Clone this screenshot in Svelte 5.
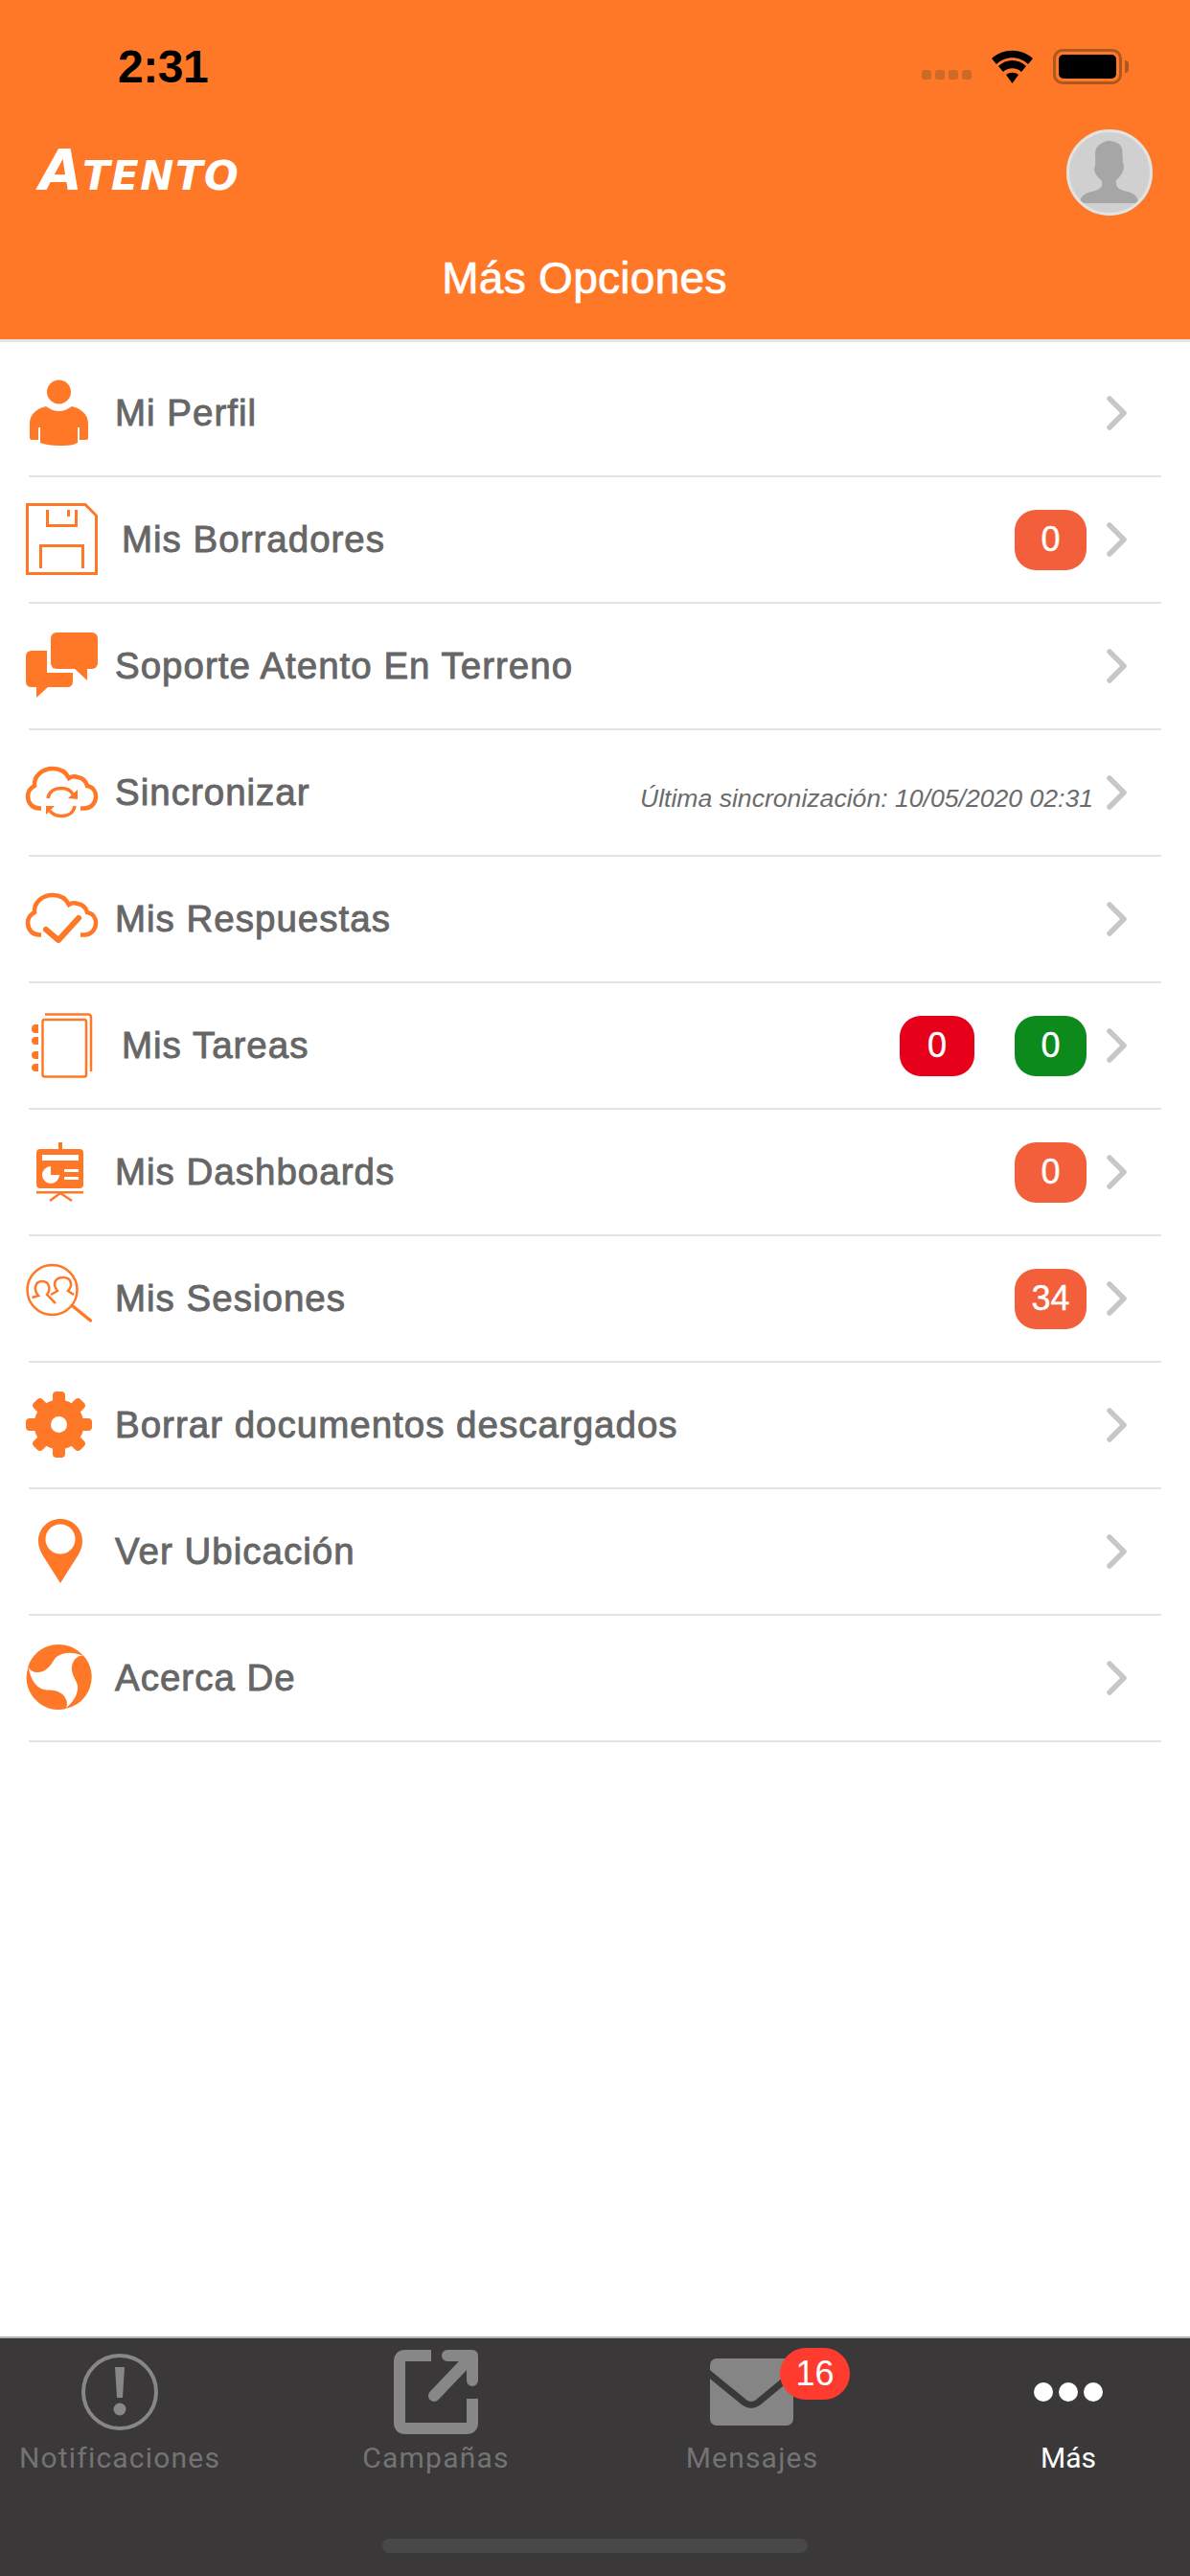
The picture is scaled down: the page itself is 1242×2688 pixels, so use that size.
<script>
  // Más Opciones screen: orange header, menu list, dark tab bar.
  const rows = [
    { id: 'perfil', label: 'Mi Perfil' },
    { id: 'borradores', label: 'Mis Borradores', wide: true, badges: [{ n: 0, c: 'orange' }] },
    { id: 'soporte', label: 'Soporte Atento En Terreno' },
    { id: 'sync', label: 'Sincronizar', note: 'Última sincronización: 10/05/2020 02:31' },
    { id: 'respuestas', label: 'Mis Respuestas' },
    { id: 'tareas', label: 'Mis Tareas', wide: true, badges: [{ n: 0, c: 'red' }, { n: 0, c: 'green' }] },
    { id: 'dash', label: 'Mis Dashboards', badges: [{ n: 0, c: 'orange' }] },
    { id: 'sesiones', label: 'Mis Sesiones', badges: [{ n: 34, c: 'orange' }] },
    { id: 'borrar', label: 'Borrar documentos descargados' },
    { id: 'ubicacion', label: 'Ver Ubicación' },
    { id: 'acerca', label: 'Acerca De' }
  ];
  const cloud =
    'M17 63.5H15C8 63.5 3 58 3 51C3 46 6 42 10 40C9 30 18 22 29 22C37 22 43 26 46 32C49 30 52 30 55 31C61 32 64 36 65 40C71 41 74 46 74 51C74 58 69 63 63 63.5H58';
</script>

{#snippet icon(id)}
  <svg class="ico" viewBox="0 0 94 94" fill="none">
    {#if id === 'perfil'}
      <circle cx="35.5" cy="25" r="12.5" fill="#ff7827" />
      <path fill="#ff7827" d="M5 73V58C5 47 14 42 22 40C26 43 31 45 35.5 45C40 45 45 43 49 40C57 42 66 47 66 58V73Q66 75 64 75H57V62H55V78C50 81 43 81 35.5 81C28 81 21 80 16 78V62H14V75H7Q5 75 5 73Z" />
    {:else if id === 'borradores'}
      <g stroke="#ff7827" stroke-width="3">
        <path d="M2.5 10.5H63L74.5 22V82.5H2.5Z" />
        <path d="M23.5 16V32.5H53.5V16M45.5 16V23M16.5 77V53.5H60.5V77" />
      </g>
    {:else if id === 'soporte'}
      <rect x="27" y="12" width="49" height="38" rx="6" fill="#ff7827" />
      <path fill="#ff7827" d="M52 50L65 62V50ZM7 31H23V54H50V63Q50 69 44 69H24L12 80V69H7Q1 69 1 63V37Q1 31 7 31Z" />
    {:else if id === 'sync'}
      <path d={cloud} stroke="#ff7827" stroke-width="4.5" />
      <g stroke="#ff7827" stroke-width="3.5">
        <path d="M24 53C25 46 31 42.5 38 42.5C44 42.5 48 45 50 49" />
        <path d="M52 61C51 68 45 71.5 38 71.5C33 71.5 29 70 26 66" />
      </g>
      <path fill="#ff7827" d="M45 53L55 44V54ZM31 61L22 70V61Z" />
    {:else if id === 'respuestas'}
      <path d={cloud} stroke="#ff7827" stroke-width="4.5" />
      <path d="M22 58L35 69L56 46" stroke="#ff7827" stroke-width="6" stroke-linecap="round" stroke-linejoin="round" />
    {:else if id === 'tareas'}
      <path d="M21 14.5H66Q69 14.5 69 18V74" stroke="#ff7827" stroke-width="2.5" />
      <rect x="18.5" y="20" width="45.5" height="59.5" rx="2" stroke="#ff7827" stroke-width="2.5" />
      <path fill="#ff7827" d="M14 25V34H11Q7 34 7 29.5Q7 25 11 25ZM14 38V46H11Q7 46 7 42Q7 38 11 38ZM14 53V61H11Q7 61 7 57Q7 53 11 53ZM14 66V74H11Q7 74 7 70Q7 66 11 66Z" />
    {:else if id === 'dash'}
      <rect x="35" y="16" width="4" height="8" fill="#ff7827" />
      <rect x="12" y="23" width="49" height="41" rx="4" fill="#ff7827" />
      <rect x="18" y="29" width="38" height="6" fill="#fff" />
      <path fill="#fff" d="M27 41A9 9 0 1 0 36 50H27Z" />
      <path fill="#fff" d="M41 44H56V47H41ZM41 52H56V55H41Z" />
      <rect x="12" y="67" width="49" height="2.5" fill="#ff7827" />
      <path d="M37 69L26 77M37 69L49 77" stroke="#ff7827" stroke-width="2.5" />
    {:else if id === 'sesiones'}
      <circle cx="28.5" cy="38" r="26" stroke="#ff7827" stroke-width="2.5" />
      <path d="M50 55L68.5 70" stroke="#ff7827" stroke-width="3.5" stroke-linecap="round" />
      <path d="M7.5 46L14 44C9 38 10 29 18 29C26 29 27 38 23 43L32 52" stroke="#ff7827" stroke-width="2.5" />
      <path d="M27 43L34 39C29 33 30 25 40 25C49 25 50 34 45 39L51 43" stroke="#ff7827" stroke-width="2.5" />
    {:else if id === 'borrar'}
      <g fill="#ff7827">
        <circle cx="35.5" cy="46.5" r="26" />
        {#each [0, 45, 90, 135, 180, 225, 270, 315] as a}
          <rect x="29" y="12" width="13" height="14" rx="4" transform="rotate({a} 35.5 46.5)" />
        {/each}
      </g>
      <circle cx="35.5" cy="46.5" r="8.5" fill="#fff" />
    {:else if id === 'ubicacion'}
      <path fill="#ff7827" fill-rule="evenodd" d="M37 13C24 13 14 23 14 36C14 42 16 46 18 50L37 80L56 50C58 46 60 42 60 36C60 23 50 13 37 13ZM37 18.5A15.5 15.5 0 1 1 37 49.5A15.5 15.5 0 1 1 37 18.5Z" />
    {:else if id === 'acerca'}
      {#each [0, 120, 240] as a}
        <path fill="#ff7827" transform="rotate({a} 35.5 46)" d="M61 23.5A33.5 33.5 0 0 1 42 79C51 72 56 63 55 55C54 49 48 44 49 35C50 28 55 23 61 23.5Z" />
      {/each}
    {/if}
  </svg>
{/snippet}

<div class="screen">
  <header class="top">
    <div class="status">
      <span class="time">2:31</span>
      <div class="status-right">
        <div class="dots"><i></i><i></i><i></i><i></i></div>
        <svg class="wifi" viewBox="0 0 47 36" fill="none">
          <path d="M2 10L7 16C16 7 31 7 40 16L45 10C33 -1 14 -1 2 10Z" fill="#000" />
          <path d="M9 18L14 24C19 19 28 19 33 24L38 18C30 10 17 10 9 18Z" fill="#000" />
          <path d="M17 27C21 24 26 24 30 27L23.5 36Z" fill="#000" />
        </svg>
        <div class="battery"><span></span></div>
        <i class="nub"></i>
      </div>
    </div>
    <div class="brand-row">
      <span class="brand">A<span>TENTO</span></span>
      <div class="avatar">
        <svg viewBox="3 3 84 84">
          <path fill="#a6a6a6" d="M14 77C14 68 22 66 30 64C36 62 38 60 37 54C33 50 29 46 29 41C31 38 30 30 30 24C31 16 38 14 42 12C48 12 56 13 58 20C59 28 58 32 60 38C60 44 56 50 52 53C51 60 54 62 60 64C68 66 75 68 75 77Z" />
        </svg>
      </div>
    </div>
    <h1>Más Opciones</h1>
  </header>

  <main class="list">
    {#each rows as r}
      <div class="row">
        {@render icon(r.id)}
        <span class="label" class:wide={r.wide}>{r.label}</span>
        {#if r.note}<span class="note">{r.note}</span>{/if}
        {#if r.badges}
          <div class="badges">
            {#each r.badges as b}<span class="badge {b.c}">{b.n}</span>{/each}
          </div>
        {/if}
        <svg class="chev" viewBox="0 0 21 36" fill="none">
          <path d="M3 3L18 18L3 33" stroke="#c7c7c7" stroke-width="5.5" stroke-linecap="round" stroke-linejoin="round" />
        </svg>
      </div>
    {/each}
  </main>

  <nav class="tabs">
    <div class="tab">
      <svg class="tab-ico" viewBox="0 0 92 92" fill="none">
        <circle cx="46" cy="46" r="38" stroke="#878787" stroke-width="4" />
        <path d="M41 20H51L49 52H43Z" fill="#878787" />
        <circle cx="46" cy="64" r="6.5" fill="#878787" />
      </svg>
      <span>Notificaciones</span>
    </div>
    <div class="tab">
      <svg class="tab-ico" viewBox="0 0 92 92" fill="none">
        <g stroke="#878787" stroke-width="12">
          <path d="M41 8H14Q8 8 8 14V78Q8 84 14 84H78Q84 84 84 78V53" />
          <path d="M58 8H84V34M84 8L44 50" stroke-linecap="round" stroke-linejoin="round" />
        </g>
      </svg>
      <span>Campañas</span>
    </div>
    <div class="tab">
      <svg class="tab-ico" viewBox="0 0 92 92" fill="none">
        <rect x="2" y="11" width="87" height="70" rx="7" fill="#858585" />
        <path d="M0 26L38 57Q45 62 52 57L92 24" stroke="#3a3839" stroke-width="7" />
      </svg>
      <span>Mensajes</span>
      <b class="count">16</b>
    </div>
    <div class="tab on">
      <svg class="tab-ico" viewBox="0 0 92 92">
        <circle cx="20" cy="46" r="10" fill="#fff" />
        <circle cx="46" cy="46" r="10" fill="#fff" />
        <circle cx="72" cy="46" r="10" fill="#fff" />
      </svg>
      <span>Más</span>
    </div>
    <div class="home"></div>
  </nav>
</div>

<style>
  :global(body) {
    margin: 0;
    background: #fff;
  }
  .screen {
    width: 1242px;
    height: 2688px;
    display: flex;
    flex-direction: column;
    font-family: "Liberation Sans", Arial, sans-serif;
    overflow: hidden;
  }
  .top {
    height: 354px;
    box-sizing: border-box;
    flex: none;
    background: #ff7827;
    box-shadow: 0 3px 0 #e3e5e5;
    padding-top: 44px;
    display: flex;
    flex-direction: column;
  }
  .status {
    height: 50px;
    display: flex;
    align-items: center;
    justify-content: space-between;
    padding: 0 64px 0 123px;
  }
  .time {
    font-size: 48px;
    font-weight: 700;
    letter-spacing: -0.5px;
    color: #000;
  }
  .status-right {
    display: flex;
    align-items: center;
  }
  .dots {
    display: flex;
    gap: 4px;
    margin: 18px 19px 0 0;
  }
  .dots i {
    width: 10px;
    height: 10px;
    border-radius: 3px;
    background: #cc6a28;
  }
  .wifi {
    width: 47px;
    height: 36px;
    margin-right: 19px;
  }
  .battery {
    width: 72px;
    height: 37px;
    box-sizing: border-box;
    border: 3px solid #ad581d;
    border-radius: 10px;
    padding: 3px;
  }
  .battery span {
    display: block;
    height: 100%;
    background: #000;
    border-radius: 5px;
  }
  .nub {
    width: 4px;
    height: 13px;
    margin-left: 3px;
    border-radius: 0 5px 5px 0;
    background: #ad581d;
  }
  .brand-row {
    display: flex;
    align-items: center;
    justify-content: space-between;
    padding: 0 39px 0 41px;
    margin-top: 41px;
    height: 90px;
  }
  .brand {
    font-family: "DejaVu Sans", sans-serif;
    font-size: 58px;
    font-style: italic;
    font-weight: 700;
    color: #fff;
    line-height: 1;
    margin-top: -4px;
  }
  .brand span {
    font-size: 42px;
    letter-spacing: 1.5px;
  }
  .avatar {
    width: 90px;
    height: 90px;
    box-sizing: border-box;
    border-radius: 50%;
    border: 3px solid #e3e3e3;
    background: #d0d0d0;
    overflow: hidden;
  }
  .avatar svg {
    display: block;
    width: 84px;
    height: 84px;
  }
  h1 {
    margin: 37px 22px 0 0;
    text-align: center;
    font-size: 46px;
    font-weight: 400;
    letter-spacing: 0.3px;
    line-height: 56px;
    color: #fff;
    -webkit-text-stroke: 0.7px #fff;
  }
  .list {
    flex: 1;
    padding: 12px 30px 0;
  }
  .row {
    height: 132px;
    box-sizing: border-box;
    border-bottom: 2px solid #e4e4e4;
    display: flex;
    align-items: center;
  }
  .ico {
    flex: none;
    width: 94px;
    height: 94px;
    margin-left: -4px;
  }
  .label {
    font-size: 38.5px;
    letter-spacing: 1px;
    color: #666;
    -webkit-text-stroke: 0.9px #666;
  }
  .label.wide {
    margin-left: 7px;
  }
  .note {
    margin-left: auto;
    margin-right: 14px;
    padding-top: 12px;
    font-size: 26.6px;
    font-style: italic;
    color: #6b6b6b;
  }
  .badges {
    margin-left: auto;
    margin-right: 21px;
    display: flex;
    gap: 42px;
  }
  .badge {
    width: 75px;
    height: 63px;
    border-radius: 22px;
    display: flex;
    align-items: center;
    justify-content: center;
    color: #fff;
    font-size: 36px;
    -webkit-text-stroke: 0.4px #fff;
  }
  .badge.orange {
    background: #f25f3a;
  }
  .badge.red {
    width: 78px;
    background: #e60019;
  }
  .badge.green {
    background: #0c8a1c;
  }
  .chev {
    flex: none;
    width: 21px;
    height: 36px;
    margin-right: 36px;
  }
  .row:not(:has(.note)):not(:has(.badges)) .chev {
    margin-left: auto;
  }
  .tabs {
    height: 250px;
    flex: none;
    box-sizing: border-box;
    background: #3a3839;
    border-top: 2px solid #b4b4b4;
    padding: 10px 0 0 20px;
    display: flex;
    gap: 120px;
    position: relative;
  }
  .tab {
    width: 210px;
    display: flex;
    flex-direction: column;
    align-items: center;
    position: relative;
    color: #737373;
    font-size: 30px;
    letter-spacing: 1.2px;
    font-family: Roboto, "Liberation Sans", sans-serif;
  }
  .tab.on {
    color: #fff;
    letter-spacing: 0;
  }
  .tab-ico {
    width: 92px;
    height: 92px;
    margin-bottom: 5px;
  }
  .count {
    position: absolute;
    left: 134px;
    top: 0;
    width: 73px;
    height: 54px;
    border-radius: 27px;
    background: #ff3b30;
    color: #fff;
    font: 400 36px/54px "Liberation Sans", sans-serif;
    letter-spacing: 0;
    text-align: center;
  }
  .home {
    position: absolute;
    left: 399px;
    bottom: 24px;
    width: 444px;
    height: 15px;
    border-radius: 8px;
    background: #484848;
  }
</style>
